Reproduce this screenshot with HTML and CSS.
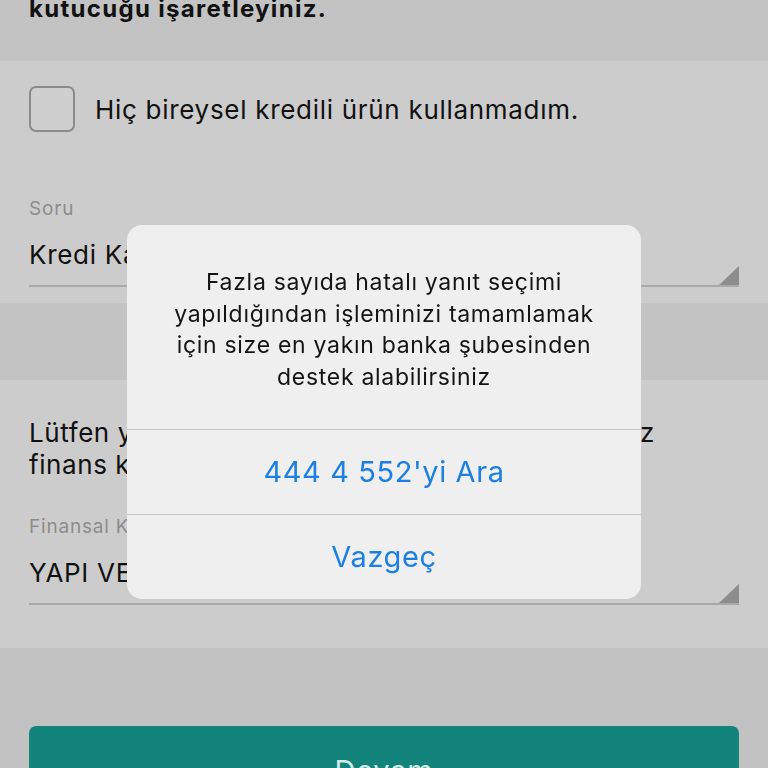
FILE: index.html
```html
<!DOCTYPE html>
<html lang="tr">
<head>
  <meta charset="UTF-8" />
  <meta name="viewport" content="width=device-width, initial-scale=1.0" />
  <title>Kredi Doğrulama</title>
  <link rel="stylesheet" href="styles.css">
</head>
<body>
  <div class="page">
    <div class="intro">
      <h2>Bireysel kredili ürün kullanmadıysanız aşağıdaki<br>kutucuğu işaretleyiniz.</h2>
    </div>

    <div class="section">
      <label class="check-row">
        <span class="checkbox"></span>
        <span>Hiç bireysel kredili ürün kullanmadım.</span>
      </label>

      <div class="field">
        <div class="field-label">Soru</div>
        <div class="field-value">Kredi Kartı</div>
        <span class="corner"></span>
      </div>
    </div>

    <div class="spacer"></div>

    <div class="section second">
      <p class="hint">Lütfen yukarıdaki seçtiğiniz ürünleri kullandığınız<br>finans kurumunu seçiniz.</p>
      <div class="field">
        <div class="field-label">Finansal Kurum</div>
        <div class="field-value">YAPI VE KREDİ BANKASI</div>
        <span class="corner"></span>
      </div>
    </div>

    <div class="footer">
      <button class="btn-next">Devam</button>
    </div>
  </div>

  <div class="alert">
    <p class="alert-msg">Fazla sayıda hatalı yanıt seçimi yapıldığından işleminizi tamamlamak için size en yakın banka şubesinden destek alabilirsiniz</p>
    <a href="#" class="alert-btn">444 4 552'yi Ara</a>
    <a href="#" class="alert-btn">Vazgeç</a>
  </div>
</body>
</html>
```

FILE: styles.css
```css
body {
  margin: 0;
  font-family: Inter, "Noto Sans", sans-serif;
  background-color: #c2c2c2;
  color: #111;
  overflow: hidden;
}
.page {
  width: 768px;
  height: 768px;
  overflow: hidden;
}
.intro {
  height: 61px;
  display: flex;
  flex-direction: column;
  justify-content: flex-end;
  overflow: hidden;
  padding: 0 29px;
  background-color: #c3c3c3;
}
.intro h2 {
  margin: 0 0 37px;
  font-size: 24px;
  line-height: 30px;
  font-weight: 700;
  letter-spacing: 1.3px;
}
.section {
  background-color: #cccccc;
  padding: 25px 29px 16px;
}
.check-row {
  display: flex;
  align-items: center;
  gap: 20px;
  font-size: 26px;
  letter-spacing: 0.7px;
}
.checkbox {
  width: 42px;
  height: 42px;
  border: 2px solid #8a8a8a;
  border-radius: 7px;
  background-color: #cfcfcf;
}
.field {
  position: relative;
  margin-top: 66px;
  border-bottom: 2px solid #a9a9a9;
  padding-bottom: 15px;
}
.field-label {
  font-size: 19px;
  line-height: 22px;
  letter-spacing: 0.8px;
  color: #8c8c8c;
}
.field-value {
  margin-top: 20px;
  font-size: 26px;
  line-height: 30px;
  letter-spacing: 0.7px;
}
.corner {
  position: absolute;
  right: 0;
  bottom: 0;
  width: 20px;
  height: 19px;
  background-color: #8d8d8d;
  clip-path: polygon(100% 0, 100% 100%, 0 100%);
}
.spacer {
  height: 77px;
  background-color: #c3c3c3;
}
.second {
  padding-top: 37px;
  padding-bottom: 43px;
}
.hint {
  margin: 0;
  font-size: 26px;
  line-height: 32px;
  letter-spacing: 0.58px;
  white-space: nowrap;
}
.second .field {
  margin-top: 35px;
}
.footer {
  padding: 78px 29px 0;
}
.btn-next {
  width: 100%;
  height: 80px;
  border: none;
  border-radius: 7px;
  background-color: #13847b;
  color: #d3e9e6;
  font-family: inherit;
  font-size: 29px;
  letter-spacing: 0.8px;
  padding-top: 10px;
}
.alert {
  position: fixed;
  left: 127px;
  top: 225px;
  width: 514px;
  border-radius: 15px;
  background-color: #efefef;
  overflow: hidden;
}
.alert-msg {
  margin: 0;
  padding: 42px 40px 36px;
  text-align: center;
  font-size: 23px;
  line-height: 31.5px;
  letter-spacing: 0.7px;
  color: #141414;
}
.alert-btn {
  display: block;
  height: 84px;
  line-height: 84px;
  border-top: 1px solid #c6c6c6;
  text-align: center;
  text-decoration: none;
  color: #1b7fe3;
  font-size: 29px;
  letter-spacing: 0.6px;
}
```
